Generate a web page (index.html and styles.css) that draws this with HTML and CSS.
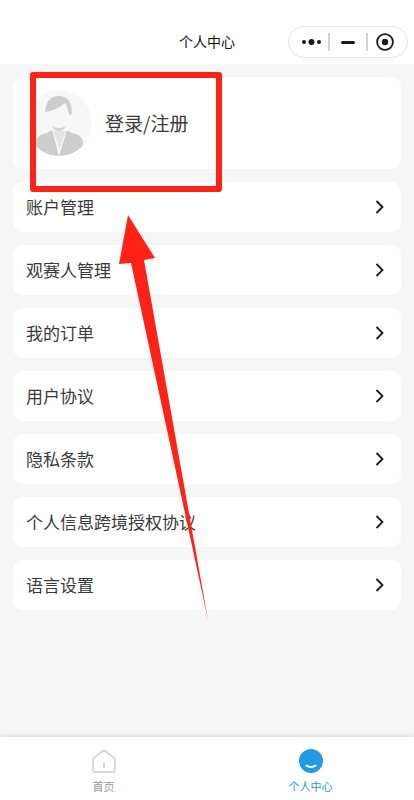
FILE: index.html
```html
<!DOCTYPE html>
<html lang="zh-CN">
<head>
  <meta charset="UTF-8" />
  <meta name="viewport" content="width=device-width, initial-scale=1" />
  <title>个人中心</title>
  <link rel="stylesheet" href="styles.css">
</head>
<body>

  <header class="nav-bar">
    <h1 class="nav-title">个人中心</h1>
    <div class="capsule">
      <svg class="capsule-more" width="19" height="8" viewBox="0 0 19 8"><circle cx="2" cy="4" r="2" /><circle cx="9.500" cy="4" r="3" /><circle cx="17" cy="4" r="2" /></svg>
      <span class="capsule-line"></span>
      <span class="capsule-min"></span>
      <span class="capsule-line"></span>
      <svg class="capsule-close" width="18" height="18" viewBox="0 0 18 18"><circle cx="9" cy="9" r="7.900" fill="none" stroke="#1a1a1a" stroke-width="1.800" /><circle cx="9" cy="9" r="3.200" fill="#1a1a1a" /></svg>
    </div>
  </header>

  <main class="content">
    <section class="login-card">
      <div class="avatar">
        <svg width="66" height="66" viewBox="0 0 66 66">
          <circle cx="33" cy="33" r="33" fill="#f7f7f7" />
          <path d="M19 22C20 12 24 6 33 6c9 0 13 6 13 18l-3 1c-1-6-2-9-4-12-6 5-13 8-20 9z" fill="#cdcdcd" />
          <path d="M26 36c4 2.500 10 2.500 14 0-1 3-4 5-7 5s-6-2-7-5z" fill="#d4d4d4" />
          <path d="M10 53c0-6 5-9 11-10l5-3 7 26c-11 0-23-4-23-13zM57 53c0-6-5-9-11-10l-5-3-8 26c11 0 24-4 24-13z" fill="#cdcdcd" />
          <path d="M27 41h13l-6.500 18z" fill="#e4e4e4" />
        </svg>
      </div>
      <span class="login-text">登录/注册</span>
    </section>

    <ul class="menu">
      <li class="menu-row"><span class="menu-text">账户管理</span><svg class="chevron" width="10" height="14" viewBox="0 0 10 14"><path d="M1.500 1 7.500 7l-6 6" /></svg></li>
      <li class="menu-row"><span class="menu-text">观赛人管理</span><svg class="chevron" width="10" height="14" viewBox="0 0 10 14"><path d="M1.500 1 7.500 7l-6 6" /></svg></li>
      <li class="menu-row"><span class="menu-text">我的订单</span><svg class="chevron" width="10" height="14" viewBox="0 0 10 14"><path d="M1.500 1 7.500 7l-6 6" /></svg></li>
      <li class="menu-row"><span class="menu-text">用户协议</span><svg class="chevron" width="10" height="14" viewBox="0 0 10 14"><path d="M1.500 1 7.500 7l-6 6" /></svg></li>
      <li class="menu-row"><span class="menu-text">隐私条款</span><svg class="chevron" width="10" height="14" viewBox="0 0 10 14"><path d="M1.500 1 7.500 7l-6 6" /></svg></li>
      <li class="menu-row"><span class="menu-text">个人信息跨境授权协议</span><svg class="chevron" width="10" height="14" viewBox="0 0 10 14"><path d="M1.500 1 7.500 7l-6 6" /></svg></li>
      <li class="menu-row"><span class="menu-text">语言设置</span><svg class="chevron" width="10" height="14" viewBox="0 0 10 14"><path d="M1.500 1 7.500 7l-6 6" /></svg></li>
    </ul>
  </main>

  <nav class="tab-bar">
    <div class="tab">
      <svg width="24" height="24" viewBox="0 0 24 24"><path d="M12 1 23 9.500V21a2 2 0 0 1-2 2H3a2 2 0 0 1-2-2V9.500z" fill="none" stroke="#d5d5e3" stroke-width="1.800" stroke-linejoin="round" /><path d="M12 13.500V19" stroke="#d5d5e3" stroke-width="1.800" /></svg>
      <span class="tab-label">首页</span>
    </div>
    <div class="tab tab-active">
      <svg width="24" height="24" viewBox="0 0 24 24"><circle cx="12" cy="12" r="12" fill="#2499e6" /><path d="M7.500 16.500c2.500 2 6.500 2 9 0" fill="none" stroke="#fff" stroke-width="2" stroke-linecap="round" /></svg>
      <span class="tab-label">个人中心</span>
    </div>
  </nav>

  <!-- red marks drawn on top of the screenshot -->
  <div class="mark-box"></div>
  <svg class="mark-arrow" width="414" height="800" viewBox="0 0 414 800"><polygon points="128,215 155,258 144,260 208,620 131,263 119,264" fill="#ff2317" /></svg>

</body>
</html>
```

FILE: styles.css
```css
* {
  box-sizing: border-box;
}

body {
  font-family: "Noto Sans CJK SC", "Liberation Sans", sans-serif;
  background: #f6f6f6;
  color: #3a3a3a;
  margin: 0;
  height: 800px;
  overflow: hidden;
  display: flex;
  flex-direction: column;
  position: relative;
}

.nav-bar {
  height: 64px;
  background: #fff;
  display: flex;
  align-items: flex-end;
  justify-content: center;
  padding-bottom: 6px;
  position: relative;
}

.nav-title {
  margin: 0;
  height: 32px;
  line-height: 30px;
  font-size: 14px;
  font-weight: 400;
  color: #111;
}

.capsule {
  position: absolute;
  top: 26px;
  right: 6px;
  width: 120px;
  height: 32px;
  border: 1px solid #e6e6e6;
  border-radius: 16px;
  display: flex;
  align-items: center;
  padding-left: 13px;
}

.capsule-more {
  fill: #1a1a1a;
}

.capsule-line {
  width: 2px;
  height: 18px;
  background: #d4d4d4;
  margin-left: 7px;
}

.capsule-min {
  width: 14px;
  height: 3px;
  background: #1a1a1a;
  border-radius: 2px;
  margin: 0 4px 0 11px;
}

.capsule-close {
  margin-left: 8px;
}

.content {
  flex: 1;
  padding: 13px;
}

.login-card {
  height: 92px;
  background: #fff;
  border-radius: 10px;
  display: flex;
  align-items: center;
  padding-left: 13px;
}

.avatar {
  width: 66px;
  height: 66px;
  border-radius: 50%;
  overflow: hidden;
}

.login-text {
  font-size: 19px;
  margin-left: 13px;
  padding-bottom: 2px;
}

.menu {
  list-style: none;
  margin: 13px 0 0;
  padding: 0;
  display: flex;
  flex-direction: column;
  gap: 13px;
}

.menu-row {
  height: 50px;
  background: #fff;
  border-radius: 10px;
  display: flex;
  align-items: center;
  justify-content: space-between;
  padding: 0 16px 0 13px;
  font-size: 17px;
}

.menu-text {
  padding-bottom: 2px;
}

.chevron {
  fill: none;
  stroke: #1a1a1a;
  stroke-width: 1.800;
}

.tab-bar {
  height: 63px;
  background: #fff;
  box-shadow: 0 -1px 4px rgba(0,0,0,0.12);
  display: flex;
}

.tab {
  flex: 1;
  display: flex;
  flex-direction: column;
  align-items: center;
  padding-top: 12px;
}

.tab-label {
  font-size: 11px;
  line-height: 16px;
  margin-top: 5px;
  color: #999;
}

.tab-active .tab-label {
  color: #2499e6;
}

.mark-box {
  position: absolute;
  left: 30px;
  top: 72px;
  width: 192px;
  height: 120px;
  border: 6px solid #ff2317;
  border-radius: 3px;
}

.mark-arrow {
  position: absolute;
  left: 0;
  top: 0;
}
```
